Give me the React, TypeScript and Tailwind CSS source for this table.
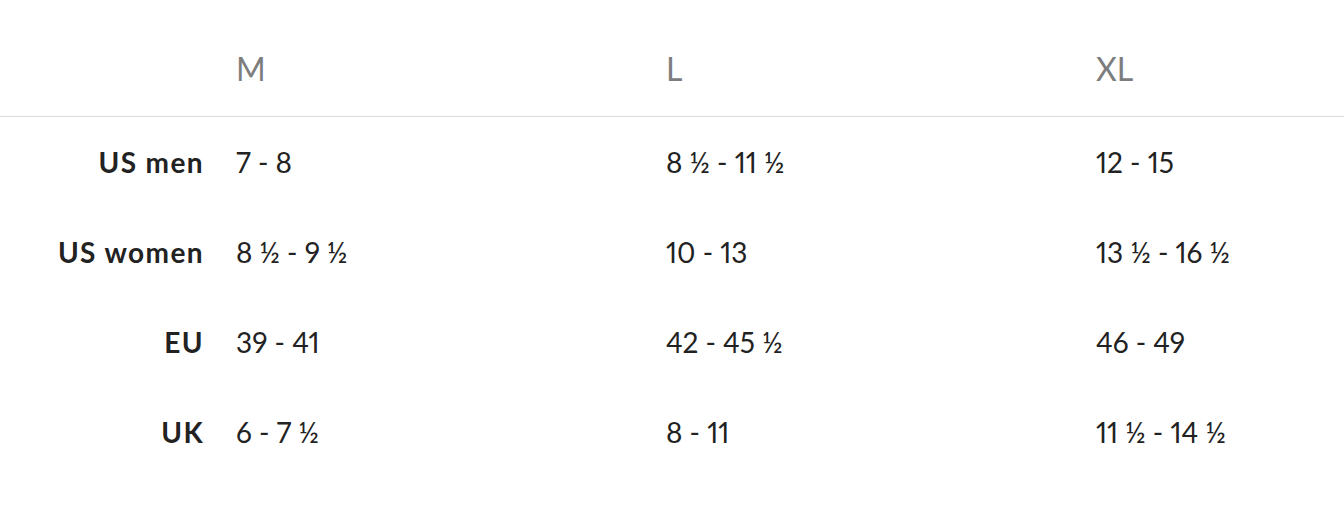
import React from 'react';

const sizes = ['M', 'L', 'XL'];

const rows = [
    { label: 'US men', values: ['7 - 8', '8 ½ - 11 ½', '12 - 15'] },
    { label: 'US women', values: ['8 ½ - 9 ½', '10 - 13', '13 ½ - 16 ½'] },
    { label: 'EU', values: ['39 - 41', '42 - 45 ½', '46 - 49'] },
    { label: 'UK', values: ['6 - 7 ½', '8 - 11', '11 ½ - 14 ½'] },
];

export default function App() {
    return (
        <div className="w-[1344px] h-[510px] overflow-hidden bg-white font-['Lato','Liberation_Sans',sans-serif]">
            <div className="grid grid-cols-[220px_430px_430px_430px] h-[117px] border-b border-[#dcdcdc] pt-[51px]">
                <div />
                {sizes.map((s) => (
                    <div key={s} className="pl-4 text-[32px] leading-[36px] text-[#7d7d7d]">{s}</div>
                ))}
            </div>
            {rows.map((row) => (
                <div key={row.label} className="grid grid-cols-[220px_430px_430px_430px] h-[90px] items-center">
                    <div className="pr-4 text-right text-[28px] font-bold tracking-[0.05em] text-[#222]">{row.label}</div>
                    {row.values.map((v, i) => (
                        <div key={i} className="pl-4 text-[28px] proportional-nums text-[#222]">{v}</div>
                    ))}
                </div>
            ))}
        </div>
    );
}
